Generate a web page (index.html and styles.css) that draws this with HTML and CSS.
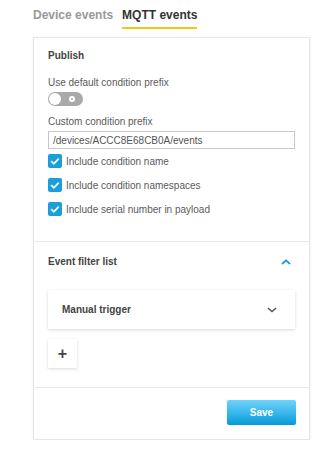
FILE: index.html
```html
<!DOCTYPE html>
<html lang="en">
<head>
  <meta charset="UTF-8">
  <meta name="viewport" content="width=device-width, initial-scale=1">
  <title>MQTT events</title>
  <link rel="stylesheet" href="styles.css">
</head>
<body>
  <nav class="tabs">
    <a class="tab" href="#">Device events</a>
    <a class="tab active" href="#">MQTT events</a>
  </nav>

  <div class="card">
    <!-- Publish -->
    <section class="section publish">
      <h3 class="section-title">Publish</h3>
      <div class="label first">Use default condition prefix</div>
      <div class="toggle"><span class="knob"></span><span class="dot"></span></div>
      <div class="label">Custom condition prefix</div>
      <input class="text-input" type="text" value="/devices/ACCC8E68CB0A/events">
      <label class="check"><span class="box"><svg viewBox="0 0 14 14" width="14" height="14"><path d="M3.2 7.2l2.6 2.6 5-5.2" fill="none" stroke="#fff" stroke-width="1.8"/></svg></span>Include condition name</label>
      <label class="check"><span class="box"><svg viewBox="0 0 14 14" width="14" height="14"><path d="M3.2 7.2l2.6 2.6 5-5.2" fill="none" stroke="#fff" stroke-width="1.8"/></svg></span>Include condition namespaces</label>
      <label class="check"><span class="box"><svg viewBox="0 0 14 14" width="14" height="14"><path d="M3.2 7.2l2.6 2.6 5-5.2" fill="none" stroke="#fff" stroke-width="1.8"/></svg></span>Include serial number in payload</label>
    </section>

    <!-- Event filter list -->
    <section class="section filters">
      <div class="section-head">
        <h3 class="section-title">Event filter list</h3>
        <svg class="chev-up" viewBox="0 0 10 6" width="10" height="6"><path d="M1 5l4-3.6L9 5" fill="none" stroke="#1a9ad6" stroke-width="1.8"/></svg>
      </div>
      <div class="filter-item">
        <span>Manual trigger</span>
        <svg viewBox="0 0 10 6" width="10" height="6"><path d="M1 1l4 3.6L9 1" fill="none" stroke="#555" stroke-width="1.5"/></svg>
      </div>
      <button class="add-btn">+</button>
    </section>

    <div class="actions">
      <button class="save-btn">Save</button>
    </div>
  </div>
</body>
</html>
```
FILE: styles.css
```css
* { margin: 0; padding: 0; box-sizing: border-box; }
body {
  background: #fff;
  color: #5a5a5a;
  font-family: 'Liberation Sans', Arial, sans-serif;
  font-size: 10px;
}
/* Tabs */
.tabs {
  display: flex;
  gap: 9px;
  padding: 7px 0 0 33px;
  height: 37px;
}
.tab {
  font-size: 12px;
  font-weight: bold;
  line-height: 16px;
  color: #999;
  text-decoration: none;
  height: 22px;
}
.tab.active {
  color: #333;
  border-bottom: 2px solid #f5c518;
}
/* Card */
.card {
  margin-left: 33px;
  width: 277px;
  border: 1px solid #e6e6e6;
  box-shadow: 0 1px 3px rgba(0,0,0,0.08);
  background: #fff;
}
.section {
  padding: 11px 14px 20px;
  border-bottom: 1px solid #e8e8e8;
}
.section-title {
  font-size: 10px;
  font-weight: bold;
  line-height: 14px;
  color: #444;
}
.label {
  line-height: 14px;
  margin-top: 9px;
}
.label.first { margin-top: 13px; }
.toggle {
  margin-top: 2px;
  width: 35px;
  height: 14px;
  border-radius: 7px;
  background: #a9a9a9;
  position: relative;
}
.toggle .knob {
  position: absolute;
  left: 1px;
  top: 1px;
  width: 12px;
  height: 12px;
  border-radius: 50%;
  background: #fff;
}
.toggle .dot {
  position: absolute;
  right: 8px;
  top: 4px;
  width: 6px;
  height: 6px;
  border-radius: 50%;
  border: 2px solid #fff;
}
.text-input {
  display: block;
  margin-top: 2px;
  width: 100%;
  height: 18px;
  border: 1px solid #c8c8c8;
  padding: 0 4px;
  font-family: inherit;
  font-size: 10px;
  color: #555;
}
.check {
  display: flex;
  align-items: center;
  gap: 4px;
  height: 24px;
}
.check .box {
  width: 14px;
  height: 14px;
  border-radius: 2px;
  background: #1a9fdb;
  display: flex;
}
/* Filters */
.filters {
  padding: 13px 14px 19px;
}
.section-head {
  display: flex;
  justify-content: space-between;
  align-items: center;
  padding-right: 4px;
}
.filter-item {
  margin-top: 21px;
  height: 39px;
  display: flex;
  justify-content: space-between;
  align-items: center;
  padding: 0 18px 0 14px;
  box-shadow: 0 1px 3px rgba(0,0,0,0.15);
  font-weight: bold;
  color: #444;
}
.add-btn {
  margin-top: 10px;
  width: 29px;
  height: 29px;
  border: none;
  background: #fff;
  box-shadow: 0 1px 3px rgba(0,0,0,0.15);
  font-family: inherit;
  font-size: 16px;
  font-weight: bold;
  color: #444;
  cursor: pointer;
}
/* Actions */
.actions {
  display: flex;
  justify-content: flex-end;
  padding: 12px 13px 14px;
}
.save-btn {
  width: 69px;
  height: 25px;
  border: none;
  border-radius: 2px;
  background: linear-gradient(#6fd4fb, #079ad9);
  color: #fff;
  font-family: inherit;
  font-size: 10px;
  font-weight: bold;
  cursor: pointer;
}
```
